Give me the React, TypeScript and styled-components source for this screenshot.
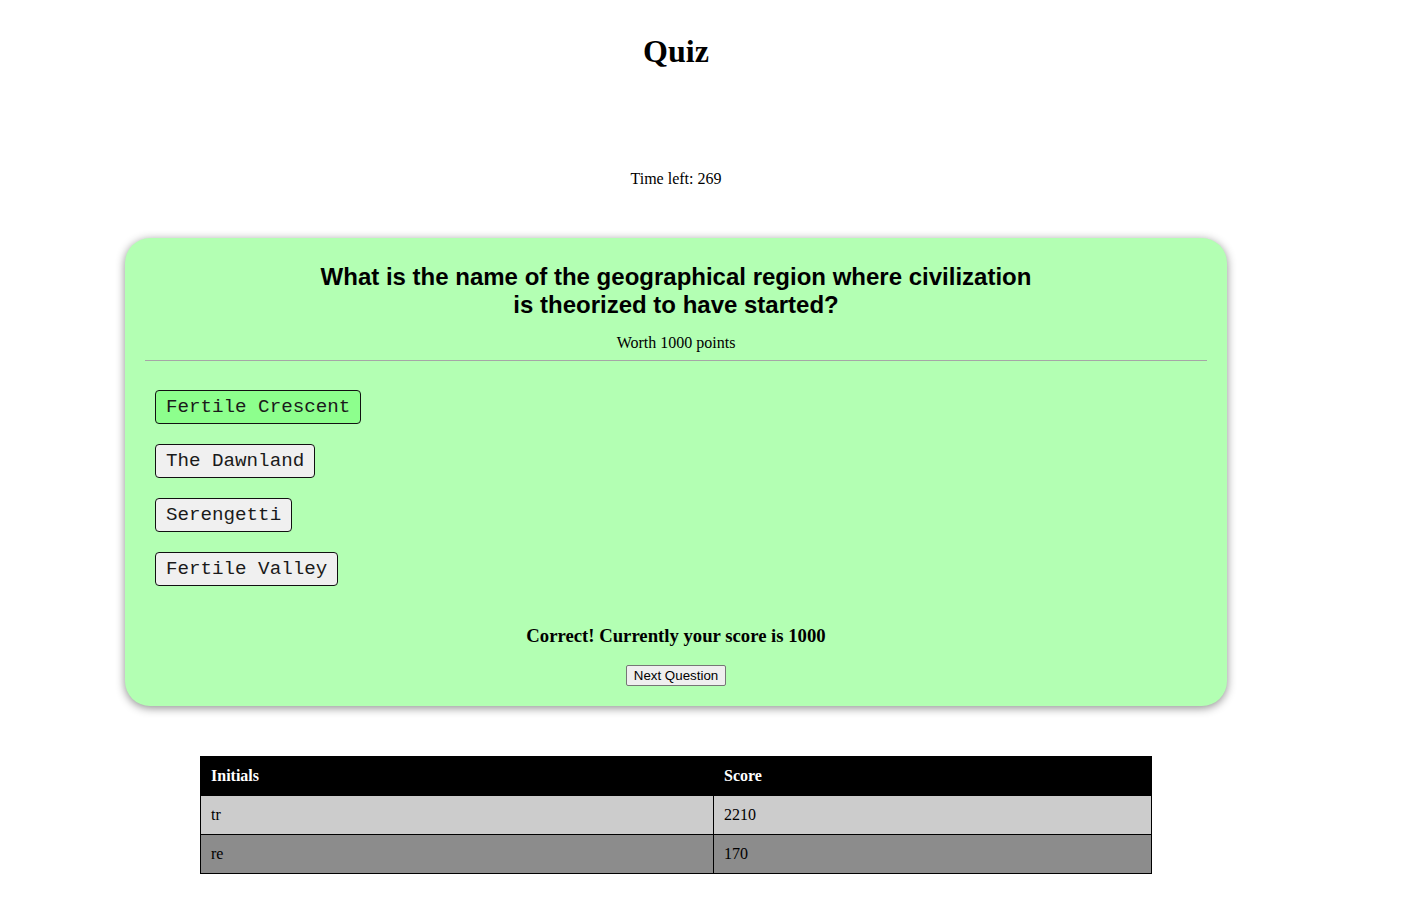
import React from "react";
import styled, { createGlobalStyle } from "styled-components";

const GlobalStyle = createGlobalStyle`
  html, body { margin: 0; padding: 0; background: #ffffff; }
  body { font-family: "Liberation Serif", "Times New Roman", serif; color: #000; }
`;

const Page = styled.div`
  width: 1352px;
  display: flex;
  flex-direction: column;
  align-items: stretch;
  padding-bottom: 30px;
`;

const Title = styled.h1`
  margin: 0;
  padding-top: 33px;
  font-size: 32px;
  line-height: 37px;
  font-weight: bold;
  text-align: center;
`;

const Timer = styled.p`
  margin: 100px 0 0;
  font-size: 16px;
  line-height: 18px;
  text-align: center;
`;

const Card = styled.section`
  margin: 50px 125px 0;
  padding: 25px 20px 20px;
  background: #b3ffb3;
  border-radius: 25px;
  box-shadow: 0 2px 10px rgba(0, 0, 0, 0.45);
  display: flex;
  flex-direction: column;
`;

const Question = styled.h2`
  margin: 0 auto;
  max-width: 720px;
  font-family: "Liberation Sans", Arial, sans-serif;
  font-size: 24px;
  line-height: 28px;
  font-weight: bold;
  text-align: center;
`;

const Worth = styled.p`
  margin: 15px 0 0;
  font-size: 16px;
  line-height: 18px;
  text-align: center;
`;

const Divider = styled.hr`
  margin: 8px 0 0;
  border: 0;
  border-top: 1px solid #a6a6a6;
  height: 0;
`;

const Answers = styled.div`
  margin-top: 29px;
  padding-left: 10px;
  display: flex;
  flex-direction: column;
  align-items: flex-start;
  gap: 20px;
`;

const AnswerButton = styled.button<{ $correct?: boolean }>`
  font-family: "Liberation Mono", "Courier New", monospace;
  font-size: 19.2px;
  line-height: 22px;
  padding: 5px 10px;
  border: 1px solid #111;
  border-radius: 4px;
  color: #1a1a1a;
  background: ${(p) => (p.$correct ? "#8dff8d" : "#f0f0f0")};
  cursor: pointer;
`;

const Result = styled.h3`
  margin: 39px 0 0;
  font-size: 18.72px;
  line-height: 22px;
  font-weight: bold;
  text-align: center;
`;

const NextButton = styled.button`
  align-self: center;
  margin-top: 18px;
  font-family: "Liberation Sans", Arial, sans-serif;
  font-size: 13.33px;
  line-height: 15px;
  padding: 2px 7px;
  background: #efefef;
  border: 1px solid #767676;
  border-radius: 2px;
  color: #000;
`;

const Scores = styled.table`
  margin: 50px 200px 0;
  width: 952px;
  border-collapse: collapse;
  font-size: 16px;
  border: 1px solid #000;
`;

const HeadCell = styled.th<{ $w?: number }>`
  background: #000;
  color: #fff;
  text-align: left;
  font-weight: bold;
  padding: 10px 10px;
  line-height: 18px;
  border: 1px solid #000;
  width: ${(p) => (p.$w ? `${p.$w}px` : "auto")};
`;

const Row = styled.tr<{ $dark?: boolean }>`
  background: ${(p) => (p.$dark ? "#8c8c8c" : "#cccccc")};
`;

const Cell = styled.td`
  padding: 10px 10px;
  line-height: 18px;
  border: 1px solid #000;
  text-align: left;
`;

const answers = [
  { text: "Fertile Crescent", correct: true },
  { text: "The Dawnland" },
  { text: "Serengetti" },
  { text: "Fertile Valley" },
];

const rows = [
  { initials: "tr", score: 2210 },
  { initials: "re", score: 170 },
];

export default function App() {
  return (
    <>
      <GlobalStyle />
      <Page>
        <Title>Quiz</Title>
        <Timer>Time left: 269</Timer>
        <Card>
          <Question>
            What is the name of the geographical region where civilization is theorized to have started?
          </Question>
          <Worth>Worth 1000 points</Worth>
          <Divider />
          <Answers>
            {answers.map((a) => (
              <AnswerButton key={a.text} $correct={a.correct}>
                {a.text}
              </AnswerButton>
            ))}
          </Answers>
          <Result>Correct! Currently your score is 1000</Result>
          <NextButton>Next Question</NextButton>
        </Card>
        <Scores>
          <thead>
            <tr>
              <HeadCell $w={492}>Initials</HeadCell>
              <HeadCell>Score</HeadCell>
            </tr>
          </thead>
          <tbody>
            {rows.map((r, i) => (
              <Row key={r.initials} $dark={i % 2 === 1}>
                <Cell>{r.initials}</Cell>
                <Cell>{r.score}</Cell>
              </Row>
            ))}
          </tbody>
        </Scores>
      </Page>
    </>
  );
}
